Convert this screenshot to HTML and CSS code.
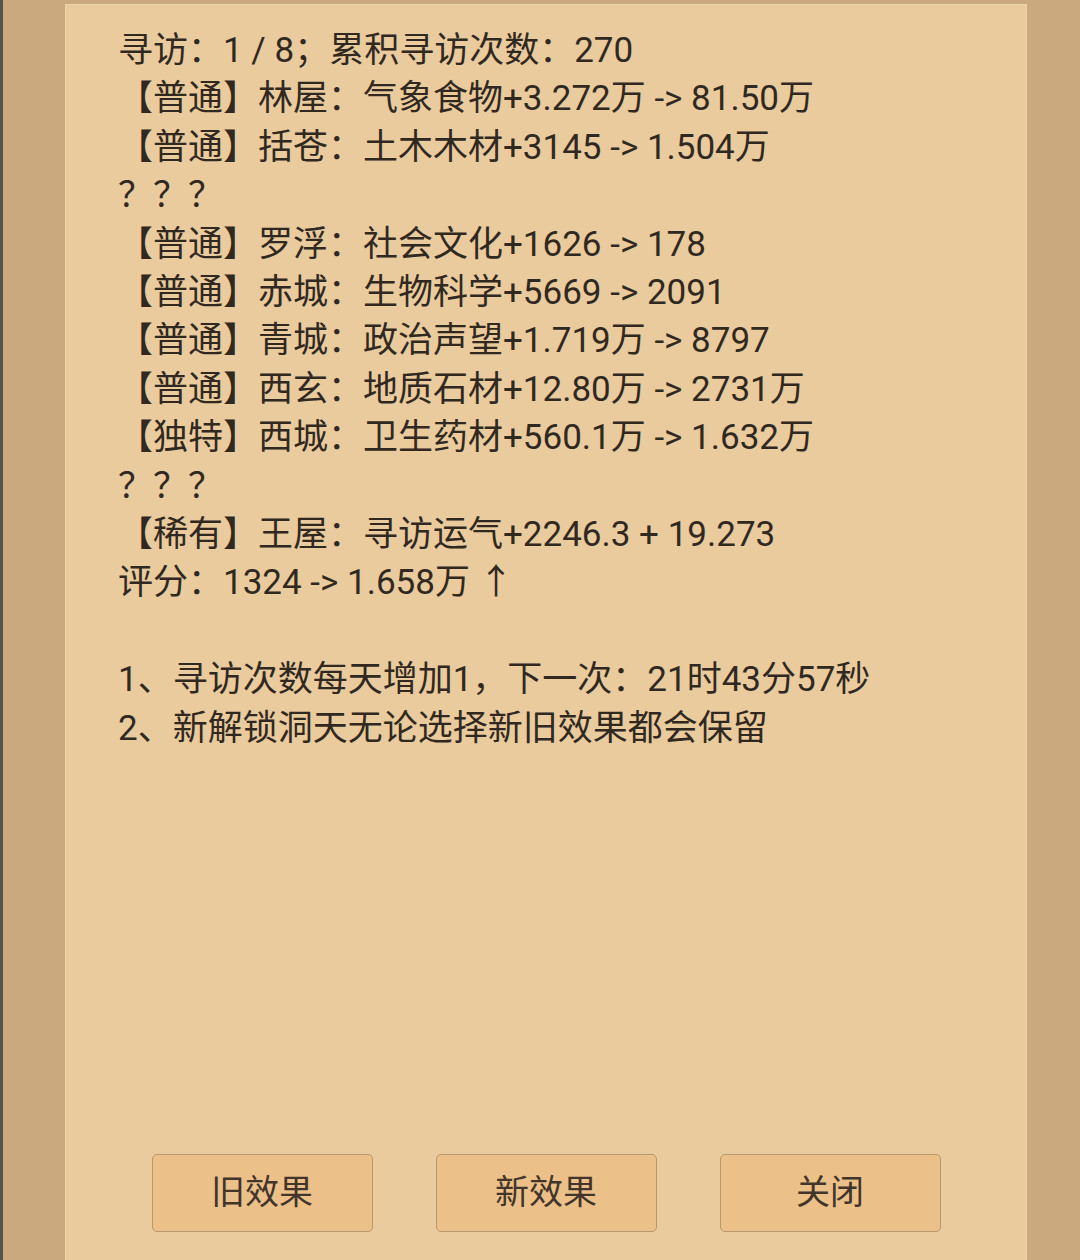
FILE: index.html
```html
<!DOCTYPE html>
<html lang="zh">
<head>
<meta charset="utf-8">
<link rel="stylesheet" href="styles.css">
</head>
<body>
<div class="frame">
  <div class="panel">
    <div class="info">
      <div class="line">寻访：1 / 8；累积寻访次数：270</div>
      <div class="line">【普通】林屋：气象食物+3.272万 -&gt; 81.50万</div>
      <div class="line">【普通】括苍：土木木材+3145 -&gt; 1.504万</div>
      <div class="line">？？？</div>
      <div class="line">【普通】罗浮：社会文化+1626 -&gt; 178</div>
      <div class="line">【普通】赤城：生物科学+5669 -&gt; 2091</div>
      <div class="line">【普通】青城：政治声望+1.719万 -&gt; 8797</div>
      <div class="line">【普通】西玄：地质石材+12.80万 -&gt; 2731万</div>
      <div class="line">【独特】西城：卫生药材+560.1万 -&gt; 1.632万</div>
      <div class="line">？？？</div>
      <div class="line">【稀有】王屋：寻访运气+2246.3 + 19.273</div>
      <div class="line">评分：1324 -&gt; 1.658万 ↑</div>
      <div class="line">&nbsp;</div>
      <div class="line">1、寻访次数每天增加1，下一次：21时43分57秒</div>
      <div class="line">2、新解锁洞天无论选择新旧效果都会保留</div>
    </div>
    <div class="actions">
      <button class="btn">旧效果</button>
      <button class="btn">新效果</button>
      <button class="btn">关闭</button>
    </div>
  </div>
</div>
</body>
</html>
```

FILE: styles.css
```css
html, body {
  margin: 0;
  padding: 0;
  height: 100%;
}
body {
  background: #cba97f;
  font-family: Roboto, "Noto Sans CJK SC", sans-serif;
  overflow: hidden;
}
.frame {
  height: 1260px;
  border-left: 3px solid #56524c;
  box-sizing: border-box;
  padding-top: 4px;
  padding-left: 62px;
}
.panel {
  width: 962px;
  height: 1256px;
  box-sizing: border-box;
  background: #eacb9e;
  border: 1px solid #efd3a8;
  border-bottom: none;
  padding: 22px 0 28px 52px;
  display: flex;
  flex-direction: column;
}
.info {
  color: #31291f;
  font-size: 35px;
  line-height: 48.4px;
}
.line {
  white-space: pre;
}
.actions {
  margin-top: auto;
  margin-left: -52px;
  display: flex;
  justify-content: center;
  gap: 63px;
}
.btn {
  width: 221px;
  height: 78px;
  background: #ecc189;
  border: 1px solid #b8976c;
  border-radius: 5px;
  font-family: Roboto, "Noto Sans CJK SC", sans-serif;
  font-size: 34px;
  line-height: 1;
  color: #43352a;
  padding: 0 0 2px 0;
}
```
